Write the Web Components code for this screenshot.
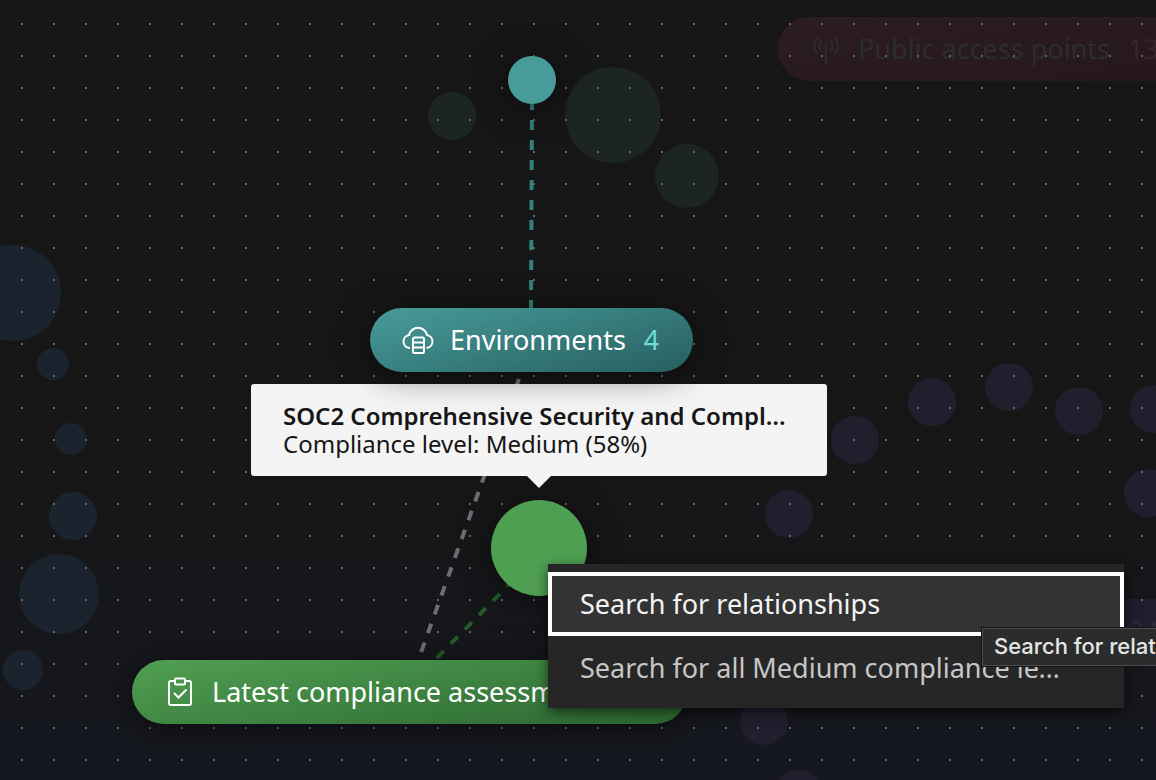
<!DOCTYPE html>
<html lang="en">
<head>
<meta charset="utf-8">
<title>Resource graph</title>
<style>
html, body { margin: 0; min-height: 100%; background: #161616; }
body { font-family: "Noto Sans", "Open Sans", sans-serif; overflow: hidden; }
</style>
</head>
<body>
<graph-canvas>
  <graph-bubble slot="dim" x="452" y="116" r="24" tone="teal"></graph-bubble>
  <graph-bubble slot="dim" x="613" y="115" r="48" tone="teal"></graph-bubble>
  <graph-bubble slot="dim" x="687" y="176" r="32" tone="teal"></graph-bubble>
  <graph-bubble slot="dim" x="13" y="293" r="48" tone="blue"></graph-bubble>
  <graph-bubble slot="dim" x="53" y="364" r="16" tone="blue"></graph-bubble>
  <graph-bubble slot="dim" x="71" y="439" r="16" tone="blue"></graph-bubble>
  <graph-bubble slot="dim" x="73" y="516" r="24" tone="blue"></graph-bubble>
  <graph-bubble slot="dim" x="59" y="594" r="40" tone="blue"></graph-bubble>
  <graph-bubble slot="dim" x="23" y="670" r="20" tone="blue"></graph-bubble>
  <graph-bubble slot="dim" x="855" y="440" r="24" tone="purple"></graph-bubble>
  <graph-bubble slot="dim" x="932" y="402" r="24" tone="purple"></graph-bubble>
  <graph-bubble slot="dim" x="1009" y="387" r="24" tone="purple"></graph-bubble>
  <graph-bubble slot="dim" x="1079" y="411" r="24" tone="purple"></graph-bubble>
  <graph-bubble slot="dim" x="1154" y="409" r="24" tone="purple"></graph-bubble>
  <graph-bubble slot="dim" x="1148" y="493" r="24" tone="purple"></graph-bubble>
  <graph-bubble slot="dim" x="789" y="514" r="24" tone="purple"></graph-bubble>
  <graph-bubble slot="dim" x="764" y="721" r="24" tone="purple"></graph-bubble>
  <graph-bubble slot="dim" x="799" y="794" r="24" tone="purple"></graph-bubble>
  <graph-pill slot="dim" x="778" y="17" w="430" tone="red-dim" icon="signal" count="13">Public access points</graph-pill>
  <graph-pill slot="dim" x="1047" y="599" w="150" tone="purple-dim" count="34"></graph-pill>

  <graph-bubble slot="node" x="532" y="80" r="24" tone="teal-live"></graph-bubble>
  <graph-bubble slot="node" x="539" y="548" r="48" tone="green-live"></graph-bubble>
  <node-tooltip slot="node" heading="SOC2 Comprehensive Security and Compliance">Compliance level: Medium (58%)</node-tooltip>
  <graph-pill slot="node" x="370" y="308" w="323" tone="teal" icon="cloud" count="4">Environments</graph-pill>
  <graph-pill slot="node" x="132" y="660" w="555" tone="green" icon="clipboard" count="7">Latest compliance assessments</graph-pill>
  <context-menu slot="overlay"></context-menu>
  <hover-hint slot="overlay">Search for relationships</hover-hint>
</graph-canvas>

<script>
class GraphCanvas extends HTMLElement {
  constructor() {
    super();
    this.attachShadow({ mode: 'open' }).innerHTML = `
      <style>
        :host { display: block; position: relative; min-height: 100vh; overflow: hidden;
          background: linear-gradient(to bottom, #161616 0, #161616 460px, #161821 800px); }
        .dots { position: absolute; inset: 0; pointer-events: none;
          background-image: conic-gradient(from 270deg at 2px 2px, #636365 90deg, transparent 0);
          background-size: 32px 32px; background-position: 21px 23px; }
        svg { position: absolute; inset: 0; width: 100%; height: 100%; }
      </style>
      <slot name="dim"></slot>
      <div class="dots"></div>
      <svg aria-hidden="true" fill="none" stroke-width="4" stroke-dasharray="10 10">
        <path d="M532 100L531 310" stroke="#357f7c"/>
        <path d="M519 379L414 672" stroke="#6b6e73"/>
        <path d="M542 551L428 667" stroke="#265c2a"/>
      </svg>
      <slot name="node"></slot>
      <slot name="overlay"></slot>`;
  }
}

const BUBBLE_TONES = {
  teal: '#1c2424', blue: '#1b242e', purple: '#231e2d',
  'teal-live': '#479c9a', 'green-live': '#4f9f52'
};
class GraphBubble extends HTMLElement {
  connectedCallback() {
    const r = +this.getAttribute('r'), tone = this.getAttribute('tone');
    const shadow = tone.endsWith('live') ? 'box-shadow: 0 4px 32px rgba(0,0,0,.5);' : '';
    this.attachShadow({ mode: 'open' }).innerHTML = `
      <style>
        :host { display: block; position: absolute; border-radius: 50%;
          left: ${this.getAttribute('x') - r}px; top: ${this.getAttribute('y') - r}px;
          width: ${2 * r}px; height: ${2 * r}px; background: ${BUBBLE_TONES[tone]}; ${shadow} }
      </style>`;
  }
}

const PILL_TONES = {
  teal: ['linear-gradient(165deg, #479c9a, #275f60)', '#fff', '#6fdcd5'],
  green: ['linear-gradient(170deg, #50a053, #2c6630)', '#fff', '#8ee08f'],
  'red-dim': ['linear-gradient(170deg, #2c1d23, #25171c)', '#2c2e2e', '#352629'],
  'purple-dim': ['#211c2e', '#2c2e32', '#2c2a3a']
};
const ICONS = {
  cloud: `<path d="M8 24H7.5A6.5 6.5 0 0 1 7 11.1A9.2 9.2 0 0 1 25 11.1A6.5 6.5 0 0 1 24.5 24H24.5"/>
    <rect x="11" y="13.5" width="11" height="15.5" rx="1.5"/><path d="M11 18.5H22M11 23.5H22"/>`,
  clipboard: `<path d="M11 5H7a2 2 0 0 0-2 2V27a2 2 0 0 0 2 2H25a2 2 0 0 0 2-2V7a2 2 0 0 0-2-2H21"/>
    <rect x="11" y="2.5" width="10" height="6" rx="1"/><path d="M10 17L14.5 21.5L22.5 13.5"/>`,
  signal: `<path d="M16 12V30M11.7 18.3a6.5 6.5 0 0 1 0-10M20.3 18.3a6.5 6.5 0 0 0 0-10M8 21.5a11.4 11.4 0 0 1 0-17M24 21.5a11.4 11.4 0 0 0 0-17"/>`
};
class GraphPill extends HTMLElement {
  connectedCallback() {
    const [bg, fg, accent] = PILL_TONES[this.getAttribute('tone')];
    const dim = this.getAttribute('tone').endsWith('dim');
    this.attachShadow({ mode: 'open' }).innerHTML = `
      <style>
        :host { display: block; position: absolute;
          left: ${this.getAttribute('x')}px; top: ${this.getAttribute('y')}px; }
        button { display: flex; align-items: center; gap: 16px; box-sizing: border-box;
          width: ${this.getAttribute('w')}px; height: 64px; padding: 0 32px; border: 0; border-radius: 32px;
          background: ${bg}; color: ${fg}; font-family: inherit;
          font-size: 27px; line-height: 36px; white-space: nowrap;
          box-shadow: ${dim ? 'none' : '0 4px 32px rgba(0,0,0,.5)'}; }
        svg { flex: none; width: 32px; height: 32px; overflow: visible; fill: none; stroke: currentColor; stroke-width: 2; }
        .count { margin-left: 2px; color: ${accent}; }
      </style>
      <button type="button">
        <svg viewBox="0 0 32 32" aria-hidden="true">${ICONS[this.getAttribute('icon')] || ''}</svg>
        <slot></slot><span class="count">${this.getAttribute('count')}</span>
      </button>`;
  }
}

class NodeTooltip extends HTMLElement {
  connectedCallback() {
    this.attachShadow({ mode: 'open' }).innerHTML = `
      <style>
        :host { display: block; position: absolute; left: 251px; top: 384px; box-sizing: border-box;
          width: 576px; padding: 18px 36px 18px 32px; border-radius: 3px; background: #f4f4f4; color: #161616;
          font-size: 24px; line-height: 28px; }
        :host::after { content: ""; position: absolute; left: 276px; top: 92px;
          border: 12px solid transparent; border-top-color: #f4f4f4; border-bottom: 0; }
        strong, span { display: block; overflow: hidden; text-overflow: ellipsis; white-space: nowrap; }
        strong { font-weight: 600; }
      </style>
      <strong>${this.getAttribute('heading')}</strong><span><slot></slot></span>`;
  }
}

class ContextMenu extends HTMLElement {
  constructor() {
    super();
    this.attachShadow({ mode: 'open' }).innerHTML = `
      <style>
        :host { display: block; position: absolute; left: 548px; top: 564px; box-sizing: border-box;
          width: 576px; padding: 8px 0; background: #262626; box-shadow: 0 4px 12px rgba(0,0,0,.6); }
        button { display: block; box-sizing: border-box; width: 100%; height: 64px; padding: 0 52px 0 28px;
          border: 4px solid transparent; background: none; color: #c6c6c6; text-align: left;
          font-family: inherit; font-size: 27px; line-height: 36px;
          overflow: hidden; text-overflow: ellipsis; white-space: nowrap; }
        .active { background: #333; border-color: #fff; color: #f4f4f4; }
      </style>
      <button class="active" type="button">Search for relationships</button>
      <button type="button">Search for all Medium compliance level resources</button>`;
  }
}

class HoverHint extends HTMLElement {
  constructor() {
    super();
    this.attachShadow({ mode: 'open' }).innerHTML = `
      <style>
        :host { display: block; position: absolute; left: 982px; top: 628px; box-sizing: border-box;
          height: 38px; padding: 0 11px; border: 1px solid #4c4d4d; background: #2b2d2d; color: #e6e6e6;
          outline: 1px solid #141414; font-family: Inter, sans-serif; font-size: 22px; line-height: 34px;
          font-weight: 500; white-space: nowrap; }
      </style>
      <slot></slot>`;
  }
}

customElements.define('graph-canvas', GraphCanvas);
customElements.define('graph-bubble', GraphBubble);
customElements.define('graph-pill', GraphPill);
customElements.define('node-tooltip', NodeTooltip);
customElements.define('context-menu', ContextMenu);
customElements.define('hover-hint', HoverHint);
</script>
</body>
</html>
